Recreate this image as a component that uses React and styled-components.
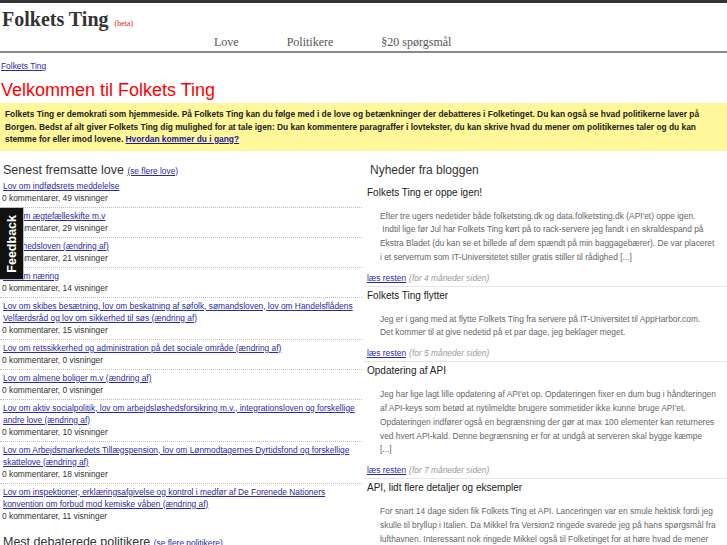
import styled, { createGlobalStyle } from 'styled-components'

const GlobalStyle = createGlobalStyle`
  html, body {
    margin: 0;
    padding: 0;
    background: #fff;
    overflow: hidden;
  }
  body {
    font-family: "Liberation Sans", Arial, sans-serif;
    color: #333;
  }
  a {
    color: #2a2aa6;
  }
`

const laws = [
  { title: 'Lov om indfødsrets meddelelse', comments: 0, views: 49 },
  { title: 'Lov om ægtefælleskifte m.v', comments: 0, views: 29 },
  { title: 'Sundhedsloven (ændring af)', comments: 0, views: 21 },
  { title: 'Lov om næring', comments: 0, views: 14 },
  {
    title:
      'Lov om skibes besætning, lov om beskatning af søfolk, sømandsloven, lov om Handelsflådens Velfærdsråd og lov om sikkerhed til søs (ændring af)',
    comments: 0,
    views: 15
  },
  { title: 'Lov om retssikkerhed og administration på det sociale område (ændring af)', comments: 0, views: 0 },
  { title: 'Lov om almene boliger m.v (ændring af)', comments: 0, views: 0 },
  {
    title:
      'Lov om aktiv socialpolitik, lov om arbejdsløshedsforsikring m.v., integrationsloven og forskellige andre love (ændring af)',
    comments: 0,
    views: 10
  },
  {
    title:
      'Lov om Arbejdsmarkedets Tillægspension, lov om Lønmodtagernes Dyrtidsfond og forskellige skattelove (ændring af)',
    comments: 0,
    views: 18
  },
  {
    title:
      'Lov om inspektioner, erklæringsafgivelse og kontrol i medfør af De Forenede Nationers konvention om forbud mod kemiske våben (ændring af)',
    comments: 0,
    views: 11
  }
]

const posts = [
  {
    title: 'Folkets Ting er oppe igen!',
    lines: [
      "Efter tre ugers nedetider både folketsting.dk og data.folketsting.dk (API'et) oppe igen.",
      '\u00a0Indtil lige før Jul har Folkets Ting kørt på to rack-servere jeg fandt i en skraldespand på',
      'Ekstra Bladet (du kan se et billede af dem spændt på min baggagebærer). De var placeret',
      'i et serverrum som IT-Universitetet stiller gratis stiller til rådighed [...]'
    ],
    age: 'for 4 måneder siden'
  },
  {
    title: 'Folkets Ting flytter',
    lines: [
      'Jeg er i gang med at flytte Folkets Ting fra servere på IT-Universitet til AppHarbor.com.',
      'Det kommer til at give nedetid på et par dage, jeg beklager meget.'
    ],
    age: 'for 5 måneder siden'
  },
  {
    title: 'Opdatering af API',
    lines: [
      "Jeg har lige lagt lille opdatering af API'et op. Opdateringen fixer en dum bug i håndteringen",
      "af API-keys som betød at nytilmeldte brugere sommetider ikke kunne bruge API'et.",
      'Opdateringen indfører også en begrænsning der gør at max 100 elementer kan returneres',
      'ved hvert API-kald. Denne begrænsning er for at undgå at serveren skal bygge kæmpe',
      '[...]'
    ],
    age: 'for 7 måneder siden'
  },
  {
    title: 'API, lidt flere detaljer og eksempler',
    lines: [
      'For snart 14 dage siden fik Folkets Ting et API. Lanceringen var en smule hektisk fordi jeg',
      'skulle til bryllup i Italien. Da Mikkel fra Version2 ringede svarede jeg på hans spørgsmål fra',
      'lufthavnen. Interessant nok ringede Mikkel også til Folketinget for at høre hvad de mener',
      'om det hele. Det blev til en artikel i Version2 [...]'
    ],
    age: 'for 8 måneder siden'
  }
]

export default function App() {
  return (
    <>
      <GlobalStyle />
      <TopBar />
      <Header>
        <SiteTitle>
          Folkets Ting <Beta>(beta)</Beta>
        </SiteTitle>
        <NavBar>
          <NavLink>Love</NavLink>
          <NavLink>Politikere</NavLink>
          <NavLink>§20 spørgsmål</NavLink>
        </NavBar>
      </Header>

      <Breadcrumb>
        <a href="#">Folkets Ting</a>
      </Breadcrumb>
      <WelcomeTitle>Velkommen til Folkets Ting</WelcomeTitle>

      <IntroBox>
        Folkets Ting er demokrati som hjemmeside. På Folkets Ting kan du følge med i de love og betænkninger der
        debatteres i Folketinget. Du kan også se hvad politikerne laver på Borgen. Bedst af alt giver Folkets Ting
        dig mulighed for at tale igen: Du kan kommentere paragraffer i lovtekster, du kan skrive hvad du mener om
        politikernes taler og du kan stemme for eller imod lovene. <IntroLink href="#">Hvordan kommer du i gang?</IntroLink>
      </IntroBox>

      <Columns>
        <LeftColumn>
          <SectionTitle>
            Senest fremsatte love <SmallLink href="#">(se flere love)</SmallLink>
          </SectionTitle>
          <LawList>
            {laws.map((law, i) => (
              <LawItem key={i}>
                <LawLink href="#">{law.title}</LawLink>
                <Meta>
                  {law.comments} kommentarer, {law.views} visninger
                </Meta>
              </LawItem>
            ))}
          </LawList>
          <SectionTitle $spaced>
            Mest debaterede politikere <SmallLink href="#">(se flere politikere)</SmallLink>
          </SectionTitle>
        </LeftColumn>

        <RightColumn>
          <BlogTitle>Nyheder fra bloggen</BlogTitle>
          {posts.map((post, i) => (
            <Post key={i}>
              <PostTitle>{post.title}</PostTitle>
              <Excerpt>
                {post.lines.map((line, j) => (
                  <ExcerptLine key={j}>{line}</ExcerptLine>
                ))}
              </Excerpt>
              <PostFooter>
                <ReadMore href="#">læs resten</ReadMore>
                <Age>({post.age})</Age>
              </PostFooter>
            </Post>
          ))}
        </RightColumn>
      </Columns>

      <FeedbackTab>
        <FeedbackText>Feedback</FeedbackText>
      </FeedbackTab>
    </>
  )
}

const TopBar = styled.div`
  height: 3px;
  background: #333;
`

const Header = styled.div`
  padding: 4px 0 0;
  border-bottom: 2px solid #8a8a8a;
`

const SiteTitle = styled.h1`
  margin: 0;
  padding-left: 2px;
  font-family: "Liberation Serif", "Times New Roman", serif;
  font-weight: bold;
  font-size: 20px;
  line-height: 24px;
  color: #333;
`

const Beta = styled.span`
  margin-left: 1px;
  font-size: 8px;
  line-height: 1;
  font-weight: normal;
  color: #d22;
`

const NavBar = styled.nav`
  display: flex;
  gap: 48px;
  margin-left: 214px;
  padding: 4px 0 2px;
`

const NavLink = styled.span`
  font-family: "Liberation Serif", "Times New Roman", serif;
  font-size: 12px;
  line-height: 14px;
  color: #555;
`

const Breadcrumb = styled.div`
  margin: 7px 0 0 1px;
  font-size: 8.4px;
  line-height: 12px;
`

const WelcomeTitle = styled.h1`
  margin: 7px 0 2px 1px;
  font-weight: normal;
  font-size: 18px;
  line-height: 22px;
  color: #f00;
`

const IntroBox = styled.div`
  background: #fff799;
  padding: 5px 5px;
  font-weight: bold;
  font-size: 8.4px;
  line-height: 12.5px;
  color: #222;
`

const IntroLink = styled.a`
  color: #1a1a99;
`

const Columns = styled.div`
  display: grid;
  grid-template-columns: 362px 1fr;
  column-gap: 2px;
  margin-top: 12px;
`

const LeftColumn = styled.div``

const SectionTitle = styled.h2`
  margin: ${(p) => (p.$spaced ? '10px' : '0')} 0 0 3px;
  font-weight: normal;
  font-size: 12.5px;
  line-height: 14px;
  color: #333;
`

const SmallLink = styled.a`
  font-size: 8.4px;
`

const LawList = styled.ul`
  list-style: none;
  margin: 0;
  padding: 0;
`

const LawItem = styled.li`
  padding: 2px 4px 3px 2px;
  border-bottom: 1px dotted #bbb;

  &:last-child {
    border-bottom: none;
  }
`

const LawLink = styled.a`
  display: block;
  margin-left: 1px;
  font-size: 8.4px;
  line-height: 12px;
`

const Meta = styled.div`
  font-size: 8.4px;
  line-height: 12px;
  color: #333;
`

const RightColumn = styled.div``

const BlogTitle = styled.h2`
  margin: 0 0 7px;
  padding-left: 6px;
  font-weight: normal;
  font-size: 12px;
  line-height: 14px;
  color: #333;
`

const Post = styled.div`
  padding: 2px 0 2px 3px;
  border-bottom: 1px solid #e6e6e6;
`

const PostTitle = styled.h3`
  margin: 0;
  font-weight: normal;
  font-size: 10px;
  line-height: 14px;
  color: #222;
`

const Excerpt = styled.div`
  margin-top: 10px;
  padding-left: 13px;
  font-size: 8.4px;
  line-height: 13.8px;
  color: #666;
  white-space: nowrap;
  overflow: hidden;
`

const ExcerptLine = styled.div``

const PostFooter = styled.div`
  margin-top: 7px;
  font-size: 8.4px;
  line-height: 12px;
`

const ReadMore = styled.a``

const Age = styled.span`
  margin-left: 3px;
  font-style: italic;
  color: #999;
`

const FeedbackTab = styled.div`
  position: fixed;
  left: 0;
  top: 207px;
  width: 24px;
  height: 73px;
  box-sizing: border-box;
  background: #111;
  border: 1px solid #bbb;
  border-left: none;
  display: flex;
  align-items: center;
  justify-content: center;
`

const FeedbackText = styled.span`
  writing-mode: vertical-rl;
  transform: rotate(180deg);
  font-weight: bold;
  font-size: 12.5px;
  color: #fff;
`
